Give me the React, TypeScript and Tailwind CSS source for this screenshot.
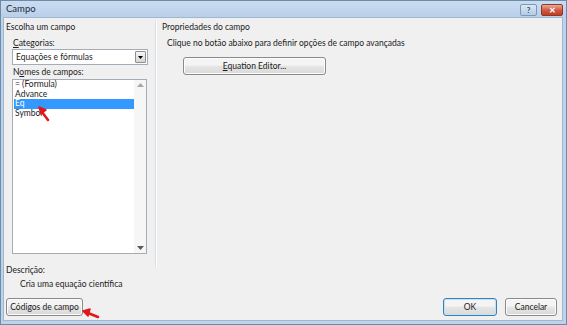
const font = { fontFamily: 'Lato, "Noto Sans", sans-serif' }

function WinButton({ children, className = "", primary = false }: { children: React.ReactNode; className?: string; primary?: boolean }) {
  return (
    <div
      className={`flex items-center justify-center whitespace-nowrap rounded-[3px] border text-[8.5px] leading-none text-[#1b1b1b] bg-gradient-to-b from-[#f4f4f4] from-45% via-[#e6e6e6] via-50% to-[#d9d9d9] ${
        primary ? "border-[#3c7fb1] shadow-[inset_0_0_0_1px_#bfe3f7]" : "border-[#8a8a8a] shadow-[inset_0_0_0_1px_#fcfcfc]"
      } ${className}`}
    >
      {children}
    </div>
  )
}

export default function App() {
  return (
    <div style={font} className="relative flex h-[325px] w-[567px] flex-col overflow-hidden border border-[#6f8aa6] bg-[#bcd3ec]">
      {/* title bar */}
      <div className="flex h-[16px] items-center justify-between bg-gradient-to-b from-[#cadcf0] to-[#b9d0ea] pl-[5px] pr-[3px]">
        <span className="text-[9.5px] leading-none text-[#1e2a38]">Campo</span>
        <div className="flex items-start gap-[4px] self-start pt-[3px]">
          <div className="flex h-[12px] w-[17px] items-center justify-center rounded-[2px] border border-[#7d98b6] bg-gradient-to-b from-[#dbe7f5] to-[#b3cbe6] text-[8px] font-bold leading-none text-[#37506e]">
            ?
          </div>
          <div className="flex h-[12px] w-[22px] items-center justify-center rounded-[2px] border border-[#8b3b2c] bg-gradient-to-b from-[#e9a99b] via-[#d25b44] to-[#c23a22] text-[8px] font-bold leading-none text-white">
            ✕
          </div>
        </div>
      </div>

      {/* client area */}
      <div className="mb-[3px] ml-[2px] mr-[3px] flex flex-1 flex-col border border-[#9fb6cf] bg-[#f0f0f0] pb-[3px] pt-[4px] text-[8.5px] leading-[10px] text-[#1b1b1b]">
        <div className="flex h-[243px]">
          {/* left column */}
          <div className="flex w-[151px] flex-col pl-[2px]">
            <div>Escolha um campo</div>
            <div className="mt-[6px] pl-[7px]">
              <span className="underline">C</span>ategorias:
            </div>
            <div className="ml-[6px] mt-[1px] flex h-[16px] w-[136px] items-center justify-between border border-[#a5acb5] bg-white pl-[3px] pr-[1px]">
              <span>Equações e fórmulas</span>
              <div className="flex h-[12px] w-[11px] items-center justify-center rounded-[1px] border border-[#8e8f8f] bg-gradient-to-b from-[#f6f6f6] to-[#d6d6d6]">
                <svg width="5" height="3" viewBox="0 0 5 3"><path d="M0 0 L5 0 L2.5 3Z" fill="#000" /></svg>
              </div>
            </div>
            <div className="mt-[2px] pl-[7px]">
              N<span className="underline">o</span>mes de campos:
            </div>
            <div className="ml-[6px] mt-[2px] flex h-[175px] w-[135px] border border-[#a5acb5] bg-white">
              <div className="flex flex-1 flex-col pl-[1px] leading-[9.7px]">
                <div className="pl-[1px]">= (Formula)</div>
                <div className="pl-[1px]">Advance</div>
                <div className="bg-[#3399ff] pl-[1px] text-white">Eq</div>
                <div className="pl-[1px]">Symbol</div>
              </div>
              <div className="flex w-[12px] flex-col items-center justify-between bg-[#f6f6f6] pb-[3px] pt-[3px]">
                <svg width="7" height="4" viewBox="0 0 7 4"><path d="M0 4 L3.5 0 L7 4Z" fill="#a8a8a8" /></svg>
                <svg width="7" height="4" viewBox="0 0 7 4"><path d="M0 0 L3.5 4 L7 0Z" fill="#5a5a5a" /></svg>
              </div>
            </div>
          </div>

          {/* separator */}
          <div className="-mt-[1px] h-[246px] w-[2px] shrink-0 border-l border-[#d5dfe5] bg-white" />

          {/* right column */}
          <div className="flex flex-1 flex-col pl-[5px]">
            <div>Propriedades do campo</div>
            <div className="mt-[6px] pl-[5px]">Clique no botão abaixo para definir opções de campo avançadas</div>
            <WinButton className="ml-[21px] mt-[9px] h-[18px] w-[143px]">
              <span>
                <span className="underline">E</span>quation Editor...
              </span>
            </WinButton>
          </div>
        </div>

        <div className="pl-[2px]">Descrição:</div>
        <div className="mt-[4px] pl-[16px]">Cria uma equação científica</div>

        <div className="mt-[9px] flex items-center justify-between pl-[2px] pr-[5px]">
          <WinButton className="h-[18px] w-[77px]">Códigos de campo</WinButton>
          <div className="flex gap-[8px]">
            <WinButton primary className="h-[18px] w-[54px]">OK</WinButton>
            <WinButton className="h-[18px] w-[52px]">Cancelar</WinButton>
          </div>
        </div>
      </div>

      {/* red pointer arrows drawn over the dialog */}
      <svg className="pointer-events-none absolute left-0 top-0" width="567" height="325">
        <g fill="#e3171b" stroke="#e3171b" strokeLinecap="round" strokeLinejoin="round">
          <line x1="47" y1="119" x2="41" y2="111" strokeWidth="2.5" />
          <path d="M38 106 L45 109 L40 113 Z" strokeWidth="1.5" />
          <line x1="97" y1="316" x2="87" y2="312" strokeWidth="2.5" />
          <path d="M82 310 L89 308 L87 315 Z" strokeWidth="1.5" />
        </g>
      </svg>
    </div>
  )
}
